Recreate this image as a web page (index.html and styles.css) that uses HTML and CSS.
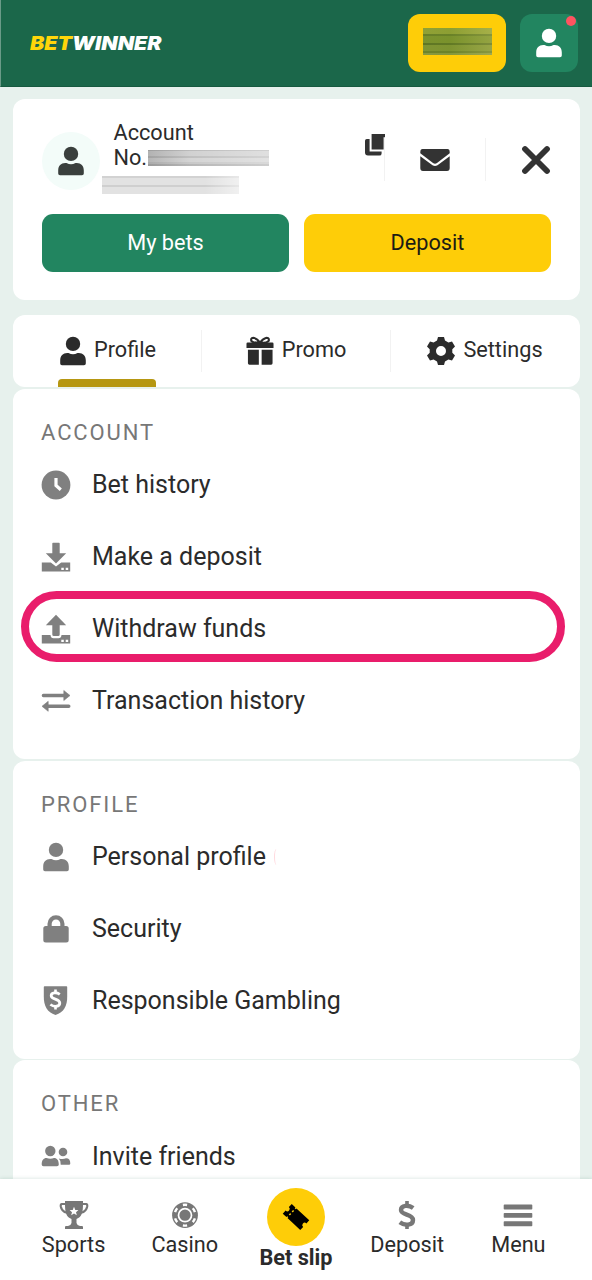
FILE: index.html
```html
<!DOCTYPE html>
<html lang="en">
<head>
<meta charset="utf-8">
<title>Betwinner</title>
<link rel="stylesheet" href="styles.css">
</head>
<body>
<svg class="defs" width="0" height="0">
  <symbol id="user" viewBox="0 0 30 30"><circle cx="15" cy="7.9" r="7.2"/><path d="M2.2 27.5V24.5C2.2 19.8 5 17 9.2 17H10.5Q15 19.4 19.500 17H20.800C25 17 27.800 19.800 27.800 24.500V27.500Q27.800 29.300 26 29.300H4Q2.200 29.300 2.200 27.500Z"/></symbol>
  <symbol id="dollar" viewBox="0 0 20 30"><path d="M10 1V5M10 25V29" fill="none" stroke="currentColor" stroke-width="3.600"/><path d="M16.200 8C11.500 4.600 4 5 4 10C4 15.600 16 13.600 16 20C16 25.400 8 26.200 2.800 22.300" fill="none" stroke="currentColor" stroke-width="4.400"/></symbol>
</svg>
<div class="page">
  <header class="header">
    <div class="logo"><span class="logo-bet">BET</span><span class="logo-win">WINNER</span></div>
    <div class="header-actions">
      <div class="balance"><div class="balance-mask"></div></div>
      <div class="user-btn"><svg class="i30"><use href="#user"/></svg><span class="dot"></span></div>
    </div>
  </header>
  <main class="main">
    <section class="card account-card">
      <div class="account-row">
        <div class="avatar"><svg class="i30"><use href="#user"/></svg></div>
        <div class="account-info">
          <div class="account-line">Account</div>
          <div class="account-line no-line">No.<span class="mask mask-a"></span></div>
          <div class="mask mask-b"></div>
        </div>
        <div class="account-tools">
          <div class="tool copy"><svg class="copy-icon" viewBox="0 0 20 22"><path d="M6.600 0H20V3.200H18.600V15.400H6.600Z"/><path d="M1.800 5H4.600V17.400H16.600V19.400Q16.600 21.600 14.400 21.600H3Q0 21.600 0 18.600V6.800Q0 5 1.800 5Z"/></svg></div>
          <div class="tool mail"><svg width="30" height="22" viewBox="0 0 30 22"><path d="M2.500 0H27.500Q29.700 0 29.700 3V4.300L17 14Q15 15.400 13 14L.3 4.300V3Q.3 0 2.500 0Z"/><path d="M.3 7.200L12.500 16.300Q15 17.700 17.500 16.300L29.700 7.200V19Q29.700 22 27 22H3Q.3 22 .3 19Z"/></svg></div>
          <div class="tool close"><svg class="i30" viewBox="0 0 30 30"><path d="M4 4L26 26M26 4L4 26" fill="none" stroke="currentColor" stroke-width="5.800" stroke-linecap="round"/></svg></div>
        </div>
      </div>
      <div class="buttons"><div class="btn btn-green">My bets</div><div class="btn btn-yellow">Deposit</div></div>
    </section>

    <nav class="card tabs">
      <div class="tab"><div class="tab-in active"><svg class="i30 tab-user"><use href="#user"/></svg><span>Profile</span></div></div>
      <div class="tab"><div class="tab-in"><svg class="tab-icon" viewBox="0 0 28 29"><path d="M1.200 5.700H26.800Q28 5.700 28 7V11.300H0V7Q0 5.700 1.200 5.700ZM1.500 13.300H12.800V28.700H3Q1.500 28.700 1.500 27.200ZM15.700 13.300H27V27.200Q27 28.700 25.500 28.700H15.700Z"/><path d="M14 6C10 0 4.800-.3 4.800 3C4.800 5.500 10 6 14 6C18 6 23.200 5.500 23.200 3C23.200-.3 18 0 14 6Z" fill="none" stroke="currentColor" stroke-width="2.200"/></svg><span>Promo</span></div></div>
      <div class="tab"><div class="tab-in"><svg class="tab-icon" viewBox="0 0 28 28"><path fill-rule="evenodd" d="M11 0H17L18 3.600L21.400 5.500L25 4.500L28 9.600L25.300 12.200V15.800L28 18.400L25 23.500L21.400 22.500L18 24.400L17 28H11L10 24.400L6.600 22.500L3 23.500L0 18.400L2.700 15.800V12.200L0 9.600L3 4.500L6.600 5.500L10 3.600ZM14 9A5 5 0 1 0 14 19A5 5 0 1 0 14 9Z"/></svg><span>Settings</span></div></div>
    </nav>

    <section class="card menu">
      <h2 class="menu-title">ACCOUNT</h2>
      <div class="row"><svg class="i30" viewBox="0 0 30 30"><circle cx="15" cy="15" r="14.400"/><path d="M15 8V15.500L19.800 19.800" fill="none" stroke="#fff" stroke-width="3.200"/></svg><span>Bet history</span></div>
      <div class="row"><svg class="i30" viewBox="0 0 30 30"><path d="M11.300 1.500Q11.300.8 12 .8H18Q18.700.8 18.700 1.500V11.200H25.200L15 21.400L4.800 11.200H11.300Z"/><path d="M.8 20.600H9.800L15 24.600L20.200 20.600H29.200V29.400H.8Z"/><path d="M20.300 25.800H22.800V28H20.300ZM24.700 25.800H27.200V28H24.700Z" fill="#fff"/></svg><span>Make a deposit</span></div>
      <div class="row marked"><svg class="i30" viewBox="0 0 30 30"><path d="M15 .8L25.200 11.200H18.700V20.500Q18.700 22 17.200 22H12.800Q11.300 22 11.300 20.500V11.200H4.800Z"/><path d="M.8 21H9.500Q9.800 24.200 12.500 24.200H17.500Q20.200 24.200 20.500 21H29.200V29.400H.8Z"/><path d="M20.300 25.800H22.800V28H20.300ZM24.700 25.800H27.200V28H24.700Z" fill="#fff"/></svg><span>Withdraw funds</span></div>
      <div class="row"><svg class="i30" viewBox="0 0 30 30"><path d="M2.400 9.500H24M27.800 20.300H6" fill="none" stroke="currentColor" stroke-width="3.400" stroke-linecap="round"/><path d="M22.800 4.500L29 9.500L22.800 14.500ZM7.200 15.300L1 20.300L7.200 25.300Z" stroke="currentColor" stroke-width=".6" stroke-linejoin="round"/></svg><span>Transaction history</span></div>
    </section>

    <section class="card menu">
      <h2 class="menu-title">PROFILE</h2>
      <div class="row"><svg class="i30"><use href="#user"/></svg><span>Personal profile</span><i class="arc"></i></div>
      <div class="row"><svg class="i30" viewBox="0 0 30 30"><path d="M8.600 14V9.700A6.400 6.400 0 0 1 21.400 9.700V14" fill="none" stroke="currentColor" stroke-width="4.200"/><rect x="2.300" y="12" width="25.400" height="16.500" rx="2.500"/></svg><span>Security</span></div>
      <div class="row"><svg class="i30" viewBox="0 0 30 30"><path d="M3.500.3H25.500Q26.200.3 26.200 1V11C26.200 19.500 23 26.500 14.500 29C6 26.500 2.800 19.500 2.800 11V1Q2.800.3 3.500.3Z"/><g fill="none" stroke="#fff"><path d="M14.500 3.500V7M14.500 20V23.500" stroke-width="2.600"/><path d="M18.800 8.300C15.500 6 10.200 6.200 10.200 9.700C10.200 13.700 18.800 12.500 18.800 17C18.800 21 13 21.200 9.400 18.500" stroke-width="2.800"/></g></svg><span>Responsible Gambling</span></div>
    </section>

    <section class="card menu">
      <h2 class="menu-title">OTHER</h2>
      <div class="row"><svg class="i30" viewBox="0 0 30 30"><circle cx="9.300" cy="10" r="5.200"/><path d="M.7 23.500C.7 19.200 2.500 17 5.500 17Q9.300 18.500 13 17C16 17 17.800 19.200 17.800 23.500Q17.800 25.300 16 25.300H2.500Q.7 25.300 .7 23.500Z"/><circle cx="22" cy="11" r="4.300"/><path d="M17.800 17.500Q22 18.800 25 17.300C28 17.300 29.300 19 29.300 22.500Q29.300 23.800 28 23.800H19.700Q20 19.500 17.800 17.500Z"/></svg><span>Invite friends</span></div>
    </section>
  </main>

  <footer class="nav">
    <div class="nav-item"><svg class="i30" viewBox="0 0 30 30"><path d="M6 1H24V4C24 12 23 17 17.500 19V23Q18 25.500 21 26H23Q24 26 24 27.200V29H6V27.200Q6 26 7 26H9Q12 25.500 12.500 23V19C7 17 6 12 6 4Z"/><path d="M6 4H2.800Q1.500 4 1.800 6.500Q2.700 11.500 8 12.800M24 4H27.200Q28.500 4 28.200 6.500Q27.300 11.500 22 12.800" fill="none" stroke="currentColor" stroke-width="2.200"/><path d="M15 6.800L16.300 9.900L19.400 10.100L17 12.200L17.800 15.200L15 13.500L12.200 15.200L13 12.200L10.600 10.100L13.700 9.900Z" fill="#fff"/></svg><span>Sports</span></div>
    <div class="nav-item"><svg class="i30" viewBox="0 0 30 30"><circle cx="15" cy="15.200" r="12.900"/><circle cx="15" cy="15.200" r="6.500" fill="none" stroke="#fff" stroke-width="1.700"/><circle cx="15" cy="15.200" r="10.400" fill="none" stroke="#fff" stroke-width="2.400" pathLength="60" stroke-dasharray="4 6" stroke-dashoffset="-3"/></svg><span>Casino</span></div>
    <div class="nav-item slip"><div class="slip-circle"><svg class="i30" viewBox="0 0 30 30"><g transform="translate(15 15) rotate(43) scale(.92 .88)"><path d="M-13-7.500H-7.500V7.500H-13V2.700A2.700 2.700 0 0 0-13-2.700ZM-6-7.500H13V-2.700A2.700 2.700 0 0 0 13 2.700V7.500H-6Z"/><path d="M-6.700-6.200V-3.500M-6.700-1.300V1.300M-6.700 3.500V6.200" stroke="#000" stroke-width="3"/></g></svg></div><span>Bet slip</span></div>
    <div class="nav-item"><svg class="dollar-icon"><use href="#dollar"/></svg><span>Deposit</span></div>
    <div class="nav-item"><svg class="i30" viewBox="0 0 30 30"><path d="M1.500 4.500H28.500Q29.300 4.500 29.300 5.300V8.700Q29.300 9.500 28.500 9.500H1.500Q.7 9.500 .7 8.700V5.300Q.7 4.500 1.500 4.500ZM1.500 13H28.500Q29.300 13 29.300 13.800V17Q29.300 17.800 28.500 17.800H1.500Q.7 17.800 .7 17V13.800Q.7 13 1.500 13ZM1.500 21.300H28.500Q29.300 21.300 29.300 22.100V25.400Q29.300 26.200 28.500 26.200H1.500Q.7 26.200 .7 25.400V22.100Q.7 21.300 1.500 21.300Z"/></svg><span>Menu</span></div>
  </footer>
</div>
</body>
</html>
```
FILE: styles.css
```css
*, *::after { box-sizing: border-box; }
body { margin: 0; font-family: Roboto, "Liberation Sans", sans-serif; color: #2b2b2b; background: #e7f1ed; }
svg { display: block; flex: none; fill: currentColor; overflow: visible; }
.defs { position: absolute; }
.i30 { width: 30px; height: 30px; }
.page { height: 1280px; display: flex; flex-direction: column; overflow: hidden; }

.header { flex: none; height: 87px; padding: 0 14px 1px 29px; display: flex; align-items: center; justify-content: space-between; background: #1b674a; border-left: 1px solid #6b9b88; border-bottom: 1px solid #175a40; }
.logo { display: flex; font: italic 900 19px Inter, sans-serif; color: #fff; transform: scaleX(1.12); transform-origin: left; padding-top: 2px; }
.logo-bet { color: #ffd60a; }
.header-actions { display: flex; gap: 14px; color: #fff; }
.balance { width: 98px; height: 58px; border-radius: 12px; background: #fecd08; display: flex; align-items: center; justify-content: center; }
.balance-mask { width: 69px; height: 27px; margin: -3px 0 0 1px; background: linear-gradient(90deg, rgba(80,110,40,.15), rgba(95,125,35,.25) 40%, rgba(190,190,110,.3)), linear-gradient(#9caa38 0 6px, #6d8328 6px 8px, #83992f 8px 15px, #627824 15px 17px, #889b35 17px 23px, #71862c 23px 25px, #91a043 25px); }
.user-btn { position: relative; width: 58px; height: 58px; border-radius: 12px; background: #228560; display: flex; align-items: center; justify-content: center; }
.dot { position: absolute; top: 2px; right: 2px; width: 10px; height: 10px; border-radius: 50%; background: #ff5360; }

.main { flex: 1; min-height: 0; overflow: hidden; padding: 12px 12.500px 0; display: flex; flex-direction: column; gap: 2px; }
.card { flex: none; background: #fff; border-radius: 12px; }
.account-card { height: 201px; padding: 21px 28.500px 0 29.500px; margin-bottom: 13px; }
.account-row { display: flex; height: 94px; }
.avatar { flex: none; width: 58px; height: 58px; margin: 12px 0 0 -.500px; border-radius: 50%; background: #f3fcf9; display: flex; align-items: center; justify-content: center; color: #3a3f3d; }
.account-info { width: 227.500px; padding-left: 14px; font-size: 21.700px; }
.account-line { height: 25px; line-height: 25px; }
.no-line { display: flex; align-items: center; }
.mask { display: block; }
.mask-a { width: 121px; height: 16px; margin: 1px 0 0 1px; background: linear-gradient(90deg, rgba(120,120,120,.25), rgba(255,255,255,.2) 35%, rgba(255,255,255,.45)), linear-gradient(#aaa 0 1px, #c6c6c6 1px 6px, #b0b0b0 6px 8px, #cacaca 8px 12px, #bbb 12px 14px, #a5a5a5 14px); }
.mask-b { width: 137px; height: 18px; margin: 6px 0 0 -12px; background: linear-gradient(90deg, rgba(255,255,255,0) 75%, rgba(255,255,255,.5)), linear-gradient(#d2d2d2 0 2px, #e2e2e2 2px 9px, #cfcfcf 9px 11px, #e2e2e2 11px); }
.account-tools { flex: 1; display: flex; padding-top: 18px; color: #333; }
.tool { height: 43px; display: flex; align-items: center; }
.copy { flex: none; width: 58px; border-right: 1px solid #f2f2f2; justify-content: flex-end; }
.copy-icon { width: 20px; height: 22px; margin: -29px -1px 0 0; }
.mail { flex: none; width: 101px; border-right: 1px solid #f2f2f2; justify-content: center; }
.close { flex: 1; justify-content: flex-end; }
.buttons { display: grid; grid-template-columns: 1fr 1fr; gap: 15px; }
.btn { height: 58px; border-radius: 11px; font-size: 21.700px; line-height: 57px; text-align: center; }
.btn-green { background: #228560; color: #fff; }
.btn-yellow { background: #fecd08; color: #1c1c14; }

.tabs { height: 72px; margin-bottom: -.500px; display: grid; grid-template-columns: 1fr 1fr 1fr; }
.tab { display: flex; justify-content: center; background: linear-gradient(#f2f2f2, #f2f2f2) right 15px / 1px 42px no-repeat; }
.tab:last-child { background: none; }
.tab-in { position: relative; display: flex; align-items: center; gap: 8px; font-size: 21.700px; }
.tab-in span { padding-bottom: 3px; }
.tab-user { margin: 0 -2px 0 0; }
.tab-icon { width: 28px; height: 28px; }
.active::after { content: ""; position: absolute; left: 0; right: 0; bottom: 0; height: 8px; border-radius: 4px 4px 0 0; background: #b69712; }

.menu { padding: 32px 29px 21px 28.500px; color: #808080; }
.menu:last-child { margin-top: -.500px; }
.menu-title { margin: 0 0 4px; font-size: 22px; font-weight: 400; line-height: 24px; letter-spacing: 1.900px; color: #777; }
.row { position: relative; height: 72px; display: flex; align-items: center; gap: 21px; font-size: 25px; }
.row span { color: #2b2b2b; }
.menu .row:last-child { margin-bottom: 1px; }
.marked::after { content: ""; position: absolute; left: -20.500px; right: -14px; top: -2px; height: 71px; border: 8px solid #e91d6b; border-radius: 36px; }
.arc { width: 5px; height: 16px; margin-left: -13px; border-left: 1px solid #ffd9de; border-radius: 50%; }

.nav { position: relative; flex: none; height: 101px; padding: 0 18px; display: grid; grid-template-columns: repeat(5, 1fr); background: #fff; box-shadow: 0 0 4px rgba(30,100,75,.2); }
.nav-item { display: flex; flex-direction: column; align-items: center; padding-top: 21px; color: #777; font-size: 21.700px; line-height: 29px; }
.nav-item span { color: #2b2b2b; white-space: nowrap; }
.dollar-icon { width: 20px; height: 30px; }
.nav .slip { padding-top: 9px; font-weight: 700; line-height: 23px; }
.slip-circle { width: 58px; height: 58px; border-radius: 50%; background: #fecd08; display: flex; align-items: center; justify-content: center; color: #000; }
```
